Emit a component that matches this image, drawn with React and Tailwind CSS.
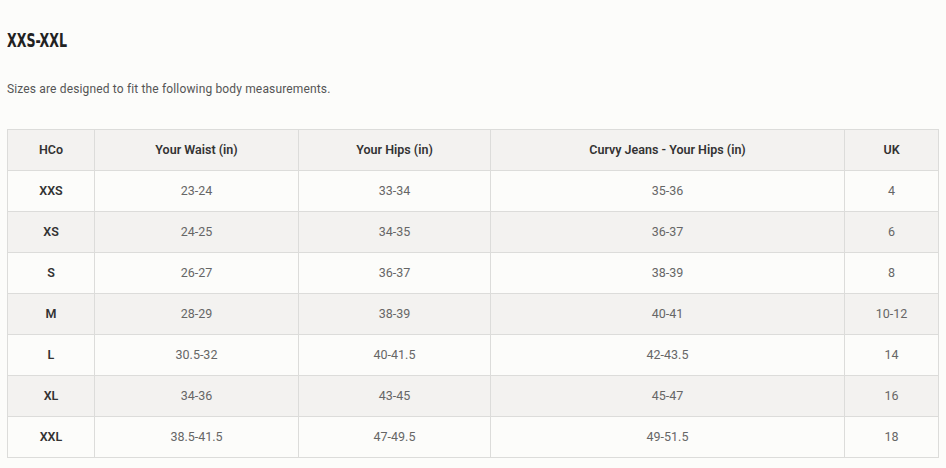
import React from "react";

const rows = [
  ["XXS", "23-24", "33-34", "35-36", "4"],
  ["XS", "24-25", "34-35", "36-37", "6"],
  ["S", "26-27", "36-37", "38-39", "8"],
  ["M", "28-29", "38-39", "40-41", "10-12"],
  ["L", "30.5-32", "40-41.5", "42-43.5", "14"],
  ["XL", "34-36", "43-45", "45-47", "16"],
  ["XXL", "38.5-41.5", "47-49.5", "49-51.5", "18"],
];

const headers = ["HCo", "Your Waist (in)", "Your Hips (in)", "Curvy Jeans - Your Hips (in)", "UK"];

function App() {
  return (
    <div className="min-h-screen w-[946px] h-[468px] bg-[#fcfcfa] pl-[7px] pt-[29px] font-['Roboto',sans-serif] overflow-hidden">
      <h1 className="origin-left scale-x-[0.7] text-[20px] font-bold leading-[22px] text-[#222] font-['DejaVu_Sans_Condensed',sans-serif]">
        XXS-XXL
      </h1>
      <p className="mt-[30px] text-[12px] leading-[16px] text-[#555] tracking-[0.15px]">
        Sizes are designed to fit the following body measurements.
      </p>
      <table className="mt-[32px] table-fixed border-collapse w-[931px] text-[12.5px]">
        <colgroup>
          <col className="w-[87px]" />
          <col className="w-[204px]" />
          <col className="w-[192px]" />
          <col className="w-[354px]" />
          <col className="w-[94px]" />
        </colgroup>
        <thead>
          <tr className="h-[41px] bg-[#f3f2f0]">
            {headers.map((h) => (
              <th key={h} className="border border-[#dcdcda] font-semibold text-[#333] text-center p-0">
                {h}
              </th>
            ))}
          </tr>
        </thead>
        <tbody>
          {rows.map((r, i) => (
            <tr key={r[0]} className={`h-[41px] ${i % 2 === 1 ? "bg-[#f3f2f0]" : "bg-[#fcfcfa]"}`}>
              {r.map((c, j) => (
                <td
                  key={j}
                  className={`border border-[#dcdcda] text-center p-0 ${j === 0 ? "font-semibold text-[#333]" : "text-[#666]"}`}
                >
                  {c}
                </td>
              ))}
            </tr>
          ))}
        </tbody>
      </table>
    </div>
  );
}

export default App;
